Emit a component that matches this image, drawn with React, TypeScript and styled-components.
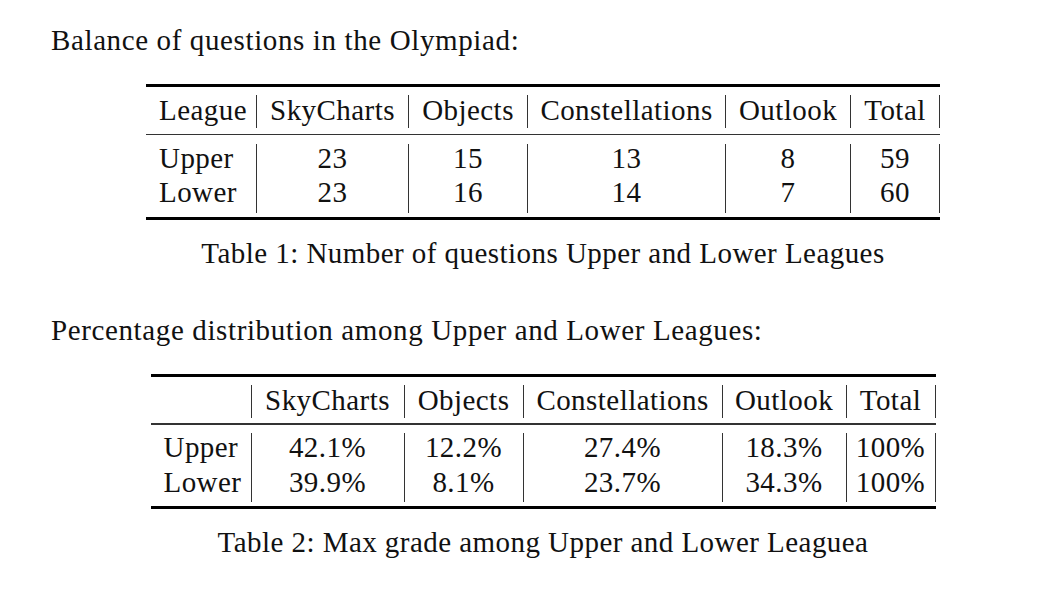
import styled, { createGlobalStyle } from 'styled-components';

const GlobalStyle = createGlobalStyle`
  html, body {
    margin: 0;
    padding: 0;
    background: #ffffff;
  }
  body {
    font-family: "Liberation Serif", "Times New Roman", serif;
    color: #111;
  }
`;

interface TableData {
  caption: string;
  firstAlign: 'left' | 'right';
  widths: number[];
  header: string[];
  rows: string[][];
}

const tables: TableData[] = [
  {
    caption: 'Table 1: Number of questions Upper and Lower Leagues',
    firstAlign: 'left',
    widths: [111, 152, 119, 198, 125, 89],
    header: ['League', 'SkyCharts', 'Objects', 'Constellations', 'Outlook', 'Total'],
    rows: [
      ['Upper', '23', '15', '13', '8', '59'],
      ['Lower', '23', '16', '14', '7', '60'],
    ],
  },
  {
    caption: 'Table 2: Max grade among Upper and Lower Leaguea',
    firstAlign: 'right',
    widths: [101, 153, 119, 199, 124, 89],
    header: ['', 'SkyCharts', 'Objects', 'Constellations', 'Outlook', 'Total'],
    rows: [
      ['Upper', '42.1%', '12.2%', '27.4%', '18.3%', '100%'],
      ['Lower', '39.9%', '8.1%', '23.7%', '34.3%', '100%'],
    ],
  },
];

function BookTable({ data }: { data: TableData }) {
  const template = data.widths.map((w) => `${w}px`).join(' ');
  const total = data.widths.reduce((a, b) => a + b, 0);

  return (
    <Figure>
      <TableBox $width={total}>
        <Rule />
        <HeaderGrid $cols={template}>
          {data.header.map((h, i) => (
            <HeadCell key={i} $align={i === 0 ? data.firstAlign : 'center'}>
              {h}
            </HeadCell>
          ))}
        </HeaderGrid>
        <MidRule />
        <BodyGrid $cols={template}>
          {data.rows.map((row) =>
            row.map((cell, i) => (
              <BodyCell key={row[0] + i} $align={i === 0 ? data.firstAlign : 'center'}>
                {cell}
              </BodyCell>
            )),
          )}
        </BodyGrid>
        <Rule $bottom />
      </TableBox>
      <Caption>{data.caption}</Caption>
    </Figure>
  );
}

export default function App() {
  return (
    <>
      <GlobalStyle />
      <Page>
        <Para>Balance of questions in the Olympiad:</Para>
        <BookTable data={tables[0]} />
        <Para $gap>Percentage distribution among Upper and Lower Leagues:</Para>
        <BookTable data={tables[1]} />
      </Page>
    </>
  );
}

const Page = styled.div`
  width: 984px;
  padding: 23px 0 0 51px;
  font-size: 29px;
  letter-spacing: 0.45px;
`;

const Para = styled.p<{ $gap?: boolean }>`
  margin: ${(p) => (p.$gap ? '43px' : '0')} 0 0;
  line-height: 34px;
  letter-spacing: 0.62px;
  white-space: nowrap;
`;

const Figure = styled.div`
  display: flex;
  flex-direction: column;
  align-items: center;
  margin-top: 27px;
`;

const TableBox = styled.div<{ $width: number }>`
  width: ${(p) => p.$width}px;
  display: flex;
  flex-direction: column;
`;

const Rule = styled.div<{ $bottom?: boolean }>`
  height: 3px;
  background: #000;
  margin-top: ${(p) => (p.$bottom ? '4px' : '0')};
`;

const MidRule = styled.div`
  height: 1.5px;
  background: #333;
  margin-top: 5.5px;
`;

const HeaderGrid = styled.div<{ $cols: string }>`
  display: grid;
  grid-template-columns: ${(p) => p.$cols};
  margin-top: 8px;
`;

const BodyGrid = styled.div<{ $cols: string }>`
  display: grid;
  grid-template-columns: ${(p) => p.$cols};
  margin-top: 8.5px;
`;

const Cell = styled.div<{ $align: 'left' | 'right' | 'center' }>`
  border-right: 1px solid #333;
  text-align: ${(p) => p.$align};
  padding: 0 ${(p) => (p.$align === 'center' ? '6px' : '13px')};
  white-space: nowrap;
`;

const HeadCell = styled(Cell)`
  height: 33px;
  line-height: 31px;
`;

const BodyCell = styled(Cell)`
  height: 34.5px;
  line-height: 29px;
`;

const Caption = styled.div`
  margin-top: 16px;
  line-height: 34px;
  white-space: nowrap;
`;
